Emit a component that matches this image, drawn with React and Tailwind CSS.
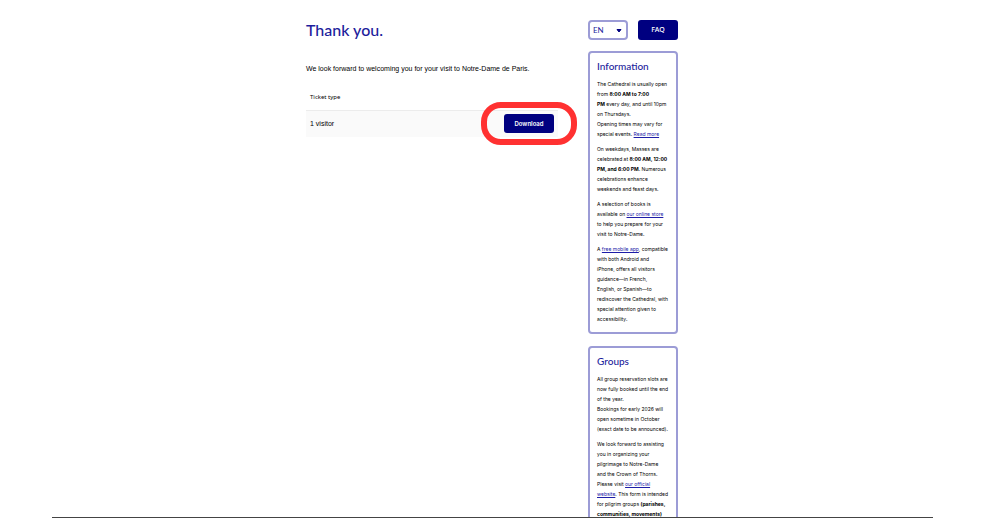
const linkClass = 'text-[#1d1da8] underline';

function Panel({ title, children }) {
  return (
    <section className="rounded-[4px] border-2 border-[#9c9cd6] px-[7px] pt-[7px] pb-2">
      <h2 className="font-['Lato'] text-[10px] leading-[12px] font-medium text-[#1d1d9c]">{title}</h2>
      <div className="mt-[7px] flex flex-col gap-[5px] whitespace-nowrap font-['Inter'] text-[5px] leading-[10px] text-black">
        {children}
      </div>
    </section>
  );
}

function LanguageSelect() {
  return (
    <div className="relative w-10">
      <select
        aria-label="Language"
        defaultValue="EN"
        className="block h-5 w-full appearance-none rounded-[4px] border-2 border-[#9c9cd6] bg-white pl-[3px] font-['Lato'] text-[8px] text-[#1d1d9c]"
      >
        <option>EN</option>
        <option>FR</option>
      </select>
      <svg viewBox="0 0 6 4" className="pointer-events-none absolute top-[9px] right-[6px] h-1 w-[6px]">
        <path d="M1 .5h4L3 3z" fill="#000080" stroke="#000080" strokeLinejoin="round" />
      </svg>
    </div>
  );
}

function Tickets() {
  return (
    <table className="mt-[11px] w-full text-left font-['Liberation_Sans'] text-[7px] text-black">
      <thead>
        <tr className="h-[25px] border-b border-[#ececec]">
          <th className="px-1 font-['Noto_Sans'] text-[6px] font-normal">Ticket type</th>
          <th></th>
        </tr>
      </thead>
      <tbody>
        <tr className="h-[27px] bg-[#fafafa]">
          <td className="px-1">1 visitor</td>
          <td className="pr-1">
            <div className="relative ml-auto w-[50px]">
              <button className="block h-[19px] w-full rounded-[3px] bg-[#000080] font-['Inter'] text-[6px] font-semibold text-white">
                Download
              </button>
              <span className="pointer-events-none absolute -inset-x-[23px] -inset-y-[12px] rounded-[20px] border-[6px] border-[#ff3131]"></span>
            </div>
          </td>
        </tr>
      </tbody>
    </table>
  );
}

function App() {
  return (
    <div className="h-screen overflow-hidden bg-white pr-[67px] pl-[52px]">
      <div className="h-full overflow-hidden border-b border-[#444] pt-5 pr-px">
        <div className="mx-auto flex max-w-[372px] gap-[30px]">
          <main className="min-w-0 flex-1">
            <h1 className="font-['Lato'] text-[16px] leading-[20px] font-medium text-[#1d1d9c]">Thank you.</h1>
            <p className="mt-6 font-['Liberation_Sans'] text-[7px] leading-[10px] whitespace-nowrap text-black">
              We look forward to welcoming you for your visit to Notre-Dame de Paris.
            </p>
            <Tickets />
          </main>

          <aside className="w-[90px] shrink-0">
            <div className="flex justify-between">
              <LanguageSelect />
              <button className="h-5 w-10 rounded-[3px] bg-[#000080] font-['Noto_Sans'] text-[7px] font-medium text-white">
                FAQ
              </button>
            </div>

            <div className="mt-[11px] flex flex-col gap-3">
              <Panel title="Information">
                <p>
                  The Cathedral is usually open<br />
                  from <b>8:00 AM to 7:00</b><br />
                  <b>PM</b> every day, and until 10pm<br />
                  on Thursdays.<br />
                  Opening times may vary for<br />
                  special events. <a href="#more" className={linkClass}>Read more</a>
                </p>
                <p>
                  On weekdays, Masses are<br />
                  celebrated at <b>8:00 AM, 12:00</b><br />
                  <b>PM, and 6:00 PM</b>. Numerous<br />
                  celebrations enhance<br />
                  weekends and feast days.
                </p>
                <p>
                  A selection of books is<br />
                  available on <a href="#store" className={linkClass}>our online store</a><br />
                  to help you prepare for your<br />
                  visit to Notre-Dame.
                </p>
                <p>
                  A <a href="#app" className={linkClass}>free mobile app</a>, compatible<br />
                  with both Android and<br />
                  iPhone, offers all visitors<br />
                  guidance—in French,<br />
                  English, or Spanish—to<br />
                  rediscover the Cathedral, with<br />
                  special attention given to<br />
                  accessibility.
                </p>
              </Panel>

              <Panel title="Groups">
                <p>
                  All group reservation slots are<br />
                  now fully booked until the end<br />
                  of the year.<br />
                  Bookings for early 2026 will<br />
                  open sometime in October<br />
                  (exact date to be announced).
                </p>
                <p>
                  We look forward to assisting<br />
                  you in organizing your<br />
                  pilgrimage to Notre-Dame<br />
                  and the Crown of Thorns.<br />
                  Please visit <a href="#official" className={linkClass}>our official</a><br />
                  <a href="#official" className={linkClass}>website</a>. This form is intended<br />
                  for pilgrim groups <b>(parishes,</b><br />
                  <b>communities, movements)</b>
                </p>
              </Panel>
            </div>
          </aside>
        </div>
      </div>
    </div>
  );
}

export default App;
